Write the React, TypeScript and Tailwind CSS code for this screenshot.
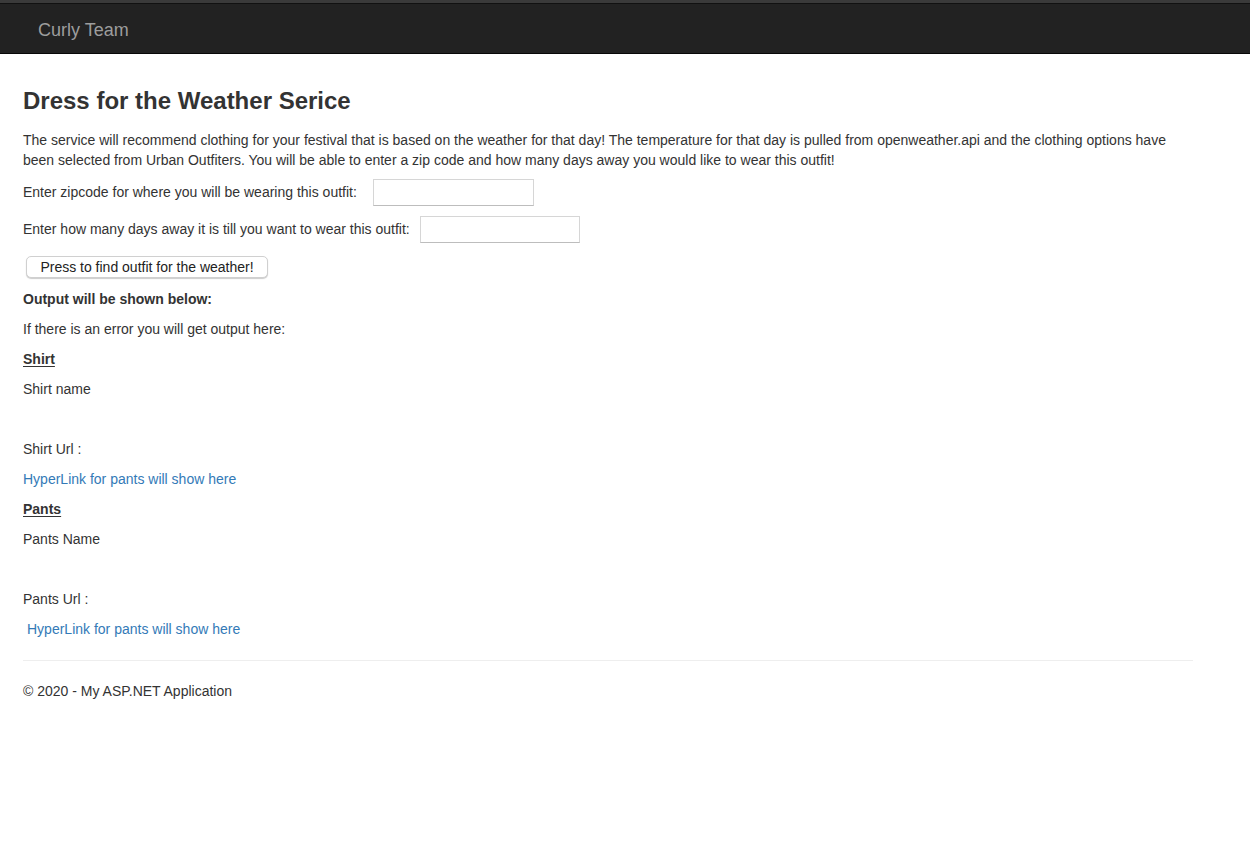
import React from "react";

export default function App() {
  const font = { fontFamily: '"Liberation Sans", Helvetica, Arial, sans-serif' };
  return (
    <div className="min-h-[843px] bg-white text-[14px] leading-[20px] text-[#333]" style={font}>
      <div className="h-[3px] bg-[#3a3a3a]" />
      <div className="h-[51px] bg-[#222] border-t border-t-[#111] border-b border-b-[#080808] flex items-center">
        <span className="ml-[38px] mt-[2px] text-[18px] text-[#9d9d9d] leading-[20px]">Curly Team</span>
      </div>
      <div className="pl-[23px] w-[1193px]">
        <h2 className="mt-[34px] mb-[16px] text-[24px] font-bold leading-[26px] text-[#333]">
          Dress for the Weather Serice
        </h2>
        <p className="mb-[9px]">
          The service will recommend clothing for your festival that is based on the weather for that day! The temperature for that day is pulled from openweather.api and the clothing options have been selected from Urban Outfiters. You will be able to enter a zip code and how many days away you would like to wear this outfit!
        </p>
        <div className="flex items-center h-[26px] mb-[11px]">
          <span>Enter zipcode for where you will be wearing this outfit:</span>
          <input className="ml-[16px] w-[161px] h-[27px] border border-[#d6d6d6] border-b-[#bdbdbd] bg-white outline-none" />
        </div>
        <div className="flex items-center h-[26px] mb-[14px]">
          <span>Enter how many days away it is till you want to wear this outfit:</span>
          <input className="ml-[10px] w-[160px] h-[27px] border border-[#d6d6d6] border-b-[#bdbdbd] bg-white outline-none" />
        </div>
        <button className="ml-[3px] w-[242px] h-[22px] text-[14px] leading-[20px] bg-white border border-[#d0d0d0] rounded-[5px] shadow-[0_1px_1px_rgba(0,0,0,0.2)] text-[#222]">
          Press to find outfit for the weather!
        </button>
        <div className="mt-[11px]">
          <p className="mb-[10px] font-bold">Output will be shown below:</p>
          <p className="mb-[10px]">If there is an error you will get output here:</p>
          <p className="mb-[10px] font-bold underline underline-offset-2">Shirt</p>
          <p className="mb-[10px]">Shirt name</p>
          <p className="mb-[10px]">&nbsp;</p>
          <p className="mb-[10px]">Shirt Url :</p>
          <p className="mb-[10px] text-[#337ab7]">HyperLink for pants will show here</p>
          <p className="mb-[10px] font-bold underline underline-offset-2">Pants</p>
          <p className="mb-[10px]">Pants Name</p>
          <p className="mb-[10px]">&nbsp;</p>
          <p className="mb-[10px]">Pants Url :</p>
          <p className="mb-[10px] pl-[4px] text-[#337ab7]">HyperLink for pants will show here</p>
        </div>
        <hr className="mt-[21px] mb-[20px] border-0 border-t border-[#eee] w-[1170px]" />
        <p>© 2020 - My ASP.NET Application</p>
      </div>
    </div>
  );
}
